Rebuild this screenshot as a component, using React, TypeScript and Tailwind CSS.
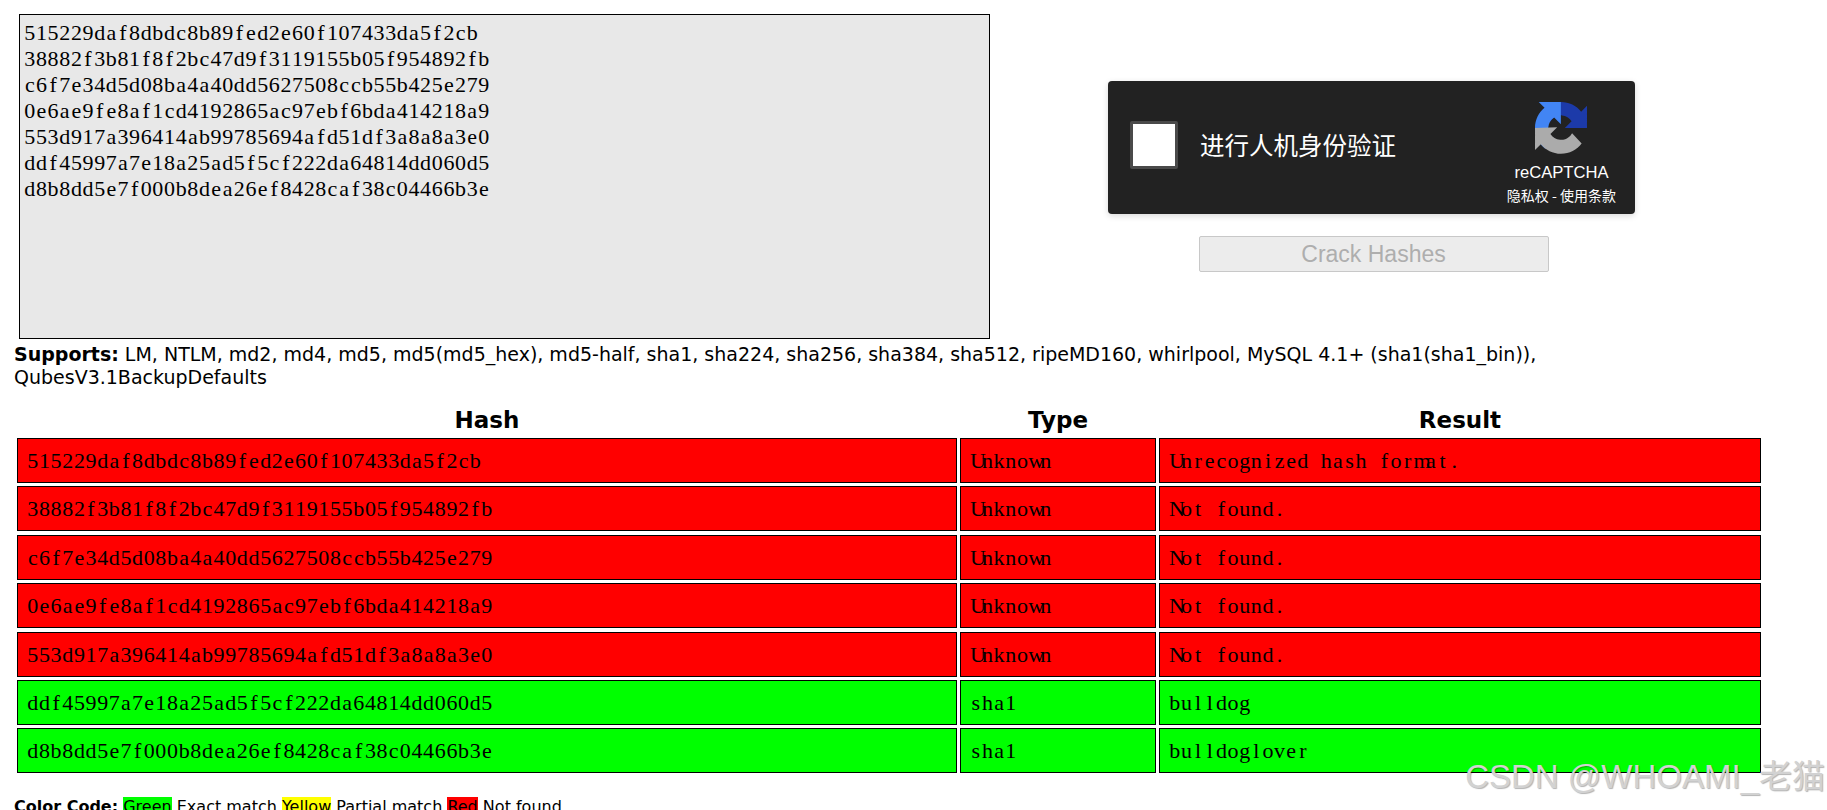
const hashes = [
  "515229daf8dbdc8b89fed2e60f107433da5f2cb",
  "38882f3b81f8f2bc47d9f3119155b05f954892fb",
  "c6f7e34d5d08ba4a40dd5627508ccb55b425e279",
  "0e6ae9fe8af1cd4192865ac97ebf6bda414218a9",
  "553d917a396414ab99785694afd51df3a8a8a3e0",
  "ddf45997a7e18a25ad5f5cf222da64814dd060d5",
  "d8b8dd5e7f000b8dea26ef8428caf38c04466b3e",
];

const rows = [
  { hash: hashes[0], type: "Unknown", result: "Unrecognized hash format.", bg: "bg-[#ff0000]" },
  { hash: hashes[1], type: "Unknown", result: "Not found.", bg: "bg-[#ff0000]" },
  { hash: hashes[2], type: "Unknown", result: "Not found.", bg: "bg-[#ff0000]" },
  { hash: hashes[3], type: "Unknown", result: "Not found.", bg: "bg-[#ff0000]" },
  { hash: hashes[4], type: "Unknown", result: "Not found.", bg: "bg-[#ff0000]" },
  { hash: hashes[5], type: "sha1", result: "bulldog", bg: "bg-[#00ff00]" },
  { hash: hashes[6], type: "sha1", result: "bulldoglover", bg: "bg-[#00ff00]" },
];

const cols = "grid grid-cols-[940px_196px_602px] gap-x-[3px]";
const cell = "h-[45px] border border-black pl-[9px] leading-[44px] text-[22px] font-['Liberation_Serif',serif]";

// serif glyphs on a fixed 11.65px cell, the reference uses a Mincho-style mono face
function Mono({ text }: { text: string }) {
  return (
    <span className="whitespace-nowrap">
      {text.split("").map((c, i) => (
        <span key={i} className="inline-block w-[11.65px] text-center">
          {c === " " ? "\u00a0" : c}
        </span>
      ))}
    </span>
  );
}

function RecaptchaLogo() {
  return (
    <svg width="52" height="52" viewBox="0 0 64 64" className="block">
      <path d="M64 31.955l-.033-1.37V4.687l-7.16 7.16C50.948 4.674 42.033.093 32.05.093c-10.4 0-19.622 4.96-25.458 12.64l11.736 11.86a15.55 15.55 0 0 1 4.754-5.334c2.05-1.6 4.952-2.906 8.968-2.906.485 0 .86.057 1.135.163 4.976.393 9.288 3.14 11.828 7.124l-8.307 8.307L64 31.953" fill="#1c3aa9" />
      <path d="M31.862 0l-1.37.033H4.594l7.16 7.16C4.58 13.05 0 21.967 0 31.95c0 10.4 4.96 19.622 12.64 25.458l11.86-11.736a15.55 15.55 0 0 1-5.334-4.754c-1.6-2.05-2.906-4.952-2.906-8.968 0-.485.057-.86.163-1.135.393-4.976 3.14-9.288 7.124-11.828l8.307 8.307L31.86 0" fill="#4285f4" />
      <path d="M.001 31.955l.033 1.37v25.898l7.16-7.16c5.86 7.173 14.774 11.754 24.76 11.754 10.4 0 19.622-4.96 25.458-12.64L45.677 38.32a15.55 15.55 0 0 1-4.754 5.334c-2.05 1.6-4.952 2.906-8.968 2.906-.485 0-.86-.057-1.135-.163-4.976-.393-9.288-3.14-11.828-7.124l8.307-8.307L.001 31.955" fill="#ababab" />
    </svg>
  );
}

export default function App() {
  return (
    <div className="relative h-[810px] overflow-hidden bg-white text-black font-['DejaVu_Sans',Verdana,sans-serif]">
      <div className="flex pl-[19px] pt-[14px]">
        <div className="w-[971px] h-[325px] border border-black bg-[#e8e8e8] pl-[4px] pt-[5px] text-[22px] leading-[26px] font-['Liberation_Serif',serif]">
          {hashes.map((h) => (
            <div key={h}>
              <Mono text={h} />
            </div>
          ))}
        </div>
        <div className="flex flex-col items-center ml-[118px] pt-[67px]">
          <div className="flex w-[527px] h-[133px] rounded-[4px] bg-[#222222] shadow-[0_2px_6px_rgba(0,0,0,0.15)]">
            <div className="flex items-start pl-[22px] pt-[40px]">
              <div className="w-[48px] h-[48px] rounded-[2px] border-[3px] border-[#4a4a4a] bg-white" />
              <span className="ml-[22px] mt-[6px] text-[24.5px] leading-[36px] text-white font-['Noto_Sans_CJK_SC',sans-serif]">进行人机身份验证</span>
            </div>
            <div className="ml-auto mr-[19px] flex flex-col items-center pt-[21px] text-white">
              <RecaptchaLogo />
              <span className="mt-[9px] text-[16.6px] leading-[20px] font-['Liberation_Sans',sans-serif]">reCAPTCHA</span>
              <span className="mt-[3px] text-[14px] leading-[18px] whitespace-nowrap font-['Noto_Sans_CJK_SC',sans-serif]">隐私权 - 使用条款</span>
            </div>
          </div>
          <button disabled className="mt-[22px] ml-[4px] w-[350px] h-[36px] rounded-[2px] border border-[#c8c8c8] bg-[#ececec] text-[23px] text-[#aeaeae] font-['Liberation_Sans',sans-serif]">
            Crack Hashes
          </button>
        </div>
      </div>

      <p className="ml-[14px] mt-[4px] w-[1580px] text-[19px] leading-[23px]">
        <b>Supports:</b> LM, NTLM, md2, md4, md5, md5(md5_hex), md5-half, sha1, sha224, sha256, sha384, sha512, ripeMD160, whirlpool, MySQL 4.1+ (sha1(sha1_bin)), QubesV3.1BackupDefaults
      </p>

      <div className="ml-[17px] mt-[16px] w-[1745px]">
        <div className={`${cols} text-center text-[23px] font-bold leading-[30px]`}>
          <div>Hash</div>
          <div>Type</div>
          <div>Result</div>
        </div>
        <div className="mt-[3px] flex flex-col gap-[3.4px]">
          {rows.map((r) => (
            <div key={r.hash} className={cols}>
              <div className={`${cell} ${r.bg}`}><Mono text={r.hash} /></div>
              <div className={`${cell} ${r.bg}`}><Mono text={r.type} /></div>
              <div className={`${cell} ${r.bg}`}><Mono text={r.result} /></div>
            </div>
          ))}
        </div>
        <p className="-ml-[3px] mt-[22px] text-[16px] leading-[24px] whitespace-nowrap">
          <b>Color Code:</b> <span className="bg-[#00ff00]">Green</span> Exact match <span className="bg-[#ffff00]">Yellow</span> Partial match <span className="bg-[#ff0000]">Red</span> Not found
        </p>
      </div>

      <div className="absolute right-[2px] top-[757px] text-[33px] leading-[40px] text-[#d2d2d2] [text-shadow:1px_1px_1px_rgba(0,0,0,0.3)] font-['Liberation_Sans','Noto_Sans_CJK_SC',sans-serif]">
        CSDN @WHOAMI_老猫
      </div>
    </div>
  );
}
